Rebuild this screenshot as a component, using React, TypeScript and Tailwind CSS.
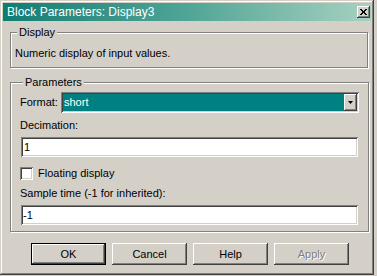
const raised =
  "shadow-[inset_-1px_-1px_0_#404040,inset_1px_1px_0_#ffffff,inset_-2px_-2px_0_#808080,inset_2px_2px_0_#d4d0c8]";
const sunken =
  "shadow-[inset_1px_1px_0_#808080,inset_-1px_-1px_0_#ffffff,inset_2px_2px_0_#404040,inset_-2px_-2px_0_#d4d0c8]";

function Group({
  title,
  className,
  children,
}: {
  title: string;
  className: string;
  children: React.ReactNode;
}) {
  return (
    <fieldset
      className={`mx-[7px] w-[358px] border border-[#808080] shadow-[inset_1px_1px_0_#ffffff,1px_1px_0_#ffffff] ${className}`}
    >
      <legend className="ml-[2px] bg-[#d4d0c8] px-[2px] leading-[13px]">
        {title}
      </legend>
      {children}
    </fieldset>
  );
}

function Button({
  label,
  isDefault,
  disabled,
}: {
  label: string;
  isDefault?: boolean;
  disabled?: boolean;
}) {
  return (
    <button
      type="button"
      className={`flex h-[22px] w-[75px] items-center justify-center bg-[#d4d0c8] ${
        isDefault
          ? "border border-black shadow-[inset_-1px_-1px_0_#404040,inset_1px_1px_0_#ffffff,inset_-2px_-2px_0_#808080]"
          : raised
      } ${disabled ? "text-[#808080] [text-shadow:1px_1px_0_#ffffff]" : "text-black"}`}
    >
      {label}
    </button>
  );
}

export default function App() {
  return (
    <div className="h-[276px] w-[377px] bg-[#d4d0c8] font-['Liberation_Sans',Arial,sans-serif] text-[11px] text-black">
      <div
        className={`h-[275px] w-[374px] bg-[#d4d0c8] p-[3px] shadow-[inset_-1px_-1px_0_#404040,inset_1px_1px_0_#d4d0c8,inset_-2px_-2px_0_#808080,inset_2px_2px_0_#ffffff]`}
      >
        <div className="flex h-[18px] items-center justify-between bg-gradient-to-r from-[#0b7d74] via-[#4fa596] to-[#a6d1c0] pl-[4px] pr-[1px]">
          <span className="text-[12px] leading-[18px] text-white">
            Block Parameters: Display3
          </span>
          <span
            className={`flex h-[12px] w-[13px] items-center justify-center bg-[#d4d0c8] ${raised}`}
          >
            <svg width="7" height="6" viewBox="0 0 7 6">
              <path d="M0 0h2v1h-2zM5 0h2v1h-2zM1 1h2v1h-2zM4 1h2v1h-2zM2 2h3v2h-3zM1 4h2v1h-2zM4 4h2v1h-2zM0 5h2v1h-2zM5 5h2v1h-2z" fill="#000" />
            </svg>
          </span>
        </div>

        <Group title="Display" className="mt-[5px] pt-[8px] pr-[4px] pb-[7px] pl-[4px]">
          <p className="leading-[13px]">Numeric display of input values.</p>
        </Group>

        <Group title="Parameters" className="mt-[8px] pt-[3px] pr-[9px] pb-[6px] pl-[10px]">
          <div className="flex h-[21px] items-center">
            <span className="-ml-[1px] w-[41px] leading-[13px]">Format:</span>
            <div className={`flex h-[21px] w-[298px] items-stretch bg-white p-[2px] ${sunken}`}>
              <div className="flex flex-1 items-center bg-[#008080] pl-[1px] text-white">
                short
              </div>
              <div
                className={`flex w-[13px] items-center justify-center bg-[#d4d0c8] ${raised}`}
              >
                <svg width="5" height="3" viewBox="0 0 5 3">
                  <path d="M0 0h5L2.5 3z" fill="#000" />
                </svg>
              </div>
            </div>
          </div>

          <p className="-ml-[1px] mt-[6px] leading-[13px]">Decimation:</p>
          <div className={`mt-[5px] flex h-[20px] w-[337px] items-center bg-white pl-[3px] ${sunken}`}>
            1
          </div>

          <label className="-ml-[1px] mt-[10px] flex h-[13px] items-center">
            <span className={`h-[13px] w-[13px] bg-white ${sunken}`} />
            <span className="ml-[5px] leading-[13px]">Floating display</span>
          </label>

          <p className="-ml-[1px] mt-[7px] leading-[13px]">Sample time (-1 for inherited):</p>
          <div className={`mt-[5px] flex h-[20px] w-[337px] items-center bg-white pl-[2px] ${sunken}`}>
            -1
          </div>
        </Group>

        <div className="mt-[11px] flex gap-[6px] pl-[28px]">
          <Button label="OK" isDefault />
          <Button label="Cancel" />
          <Button label="Help" />
          <Button label="Apply" disabled />
        </div>
      </div>
    </div>
  );
}
